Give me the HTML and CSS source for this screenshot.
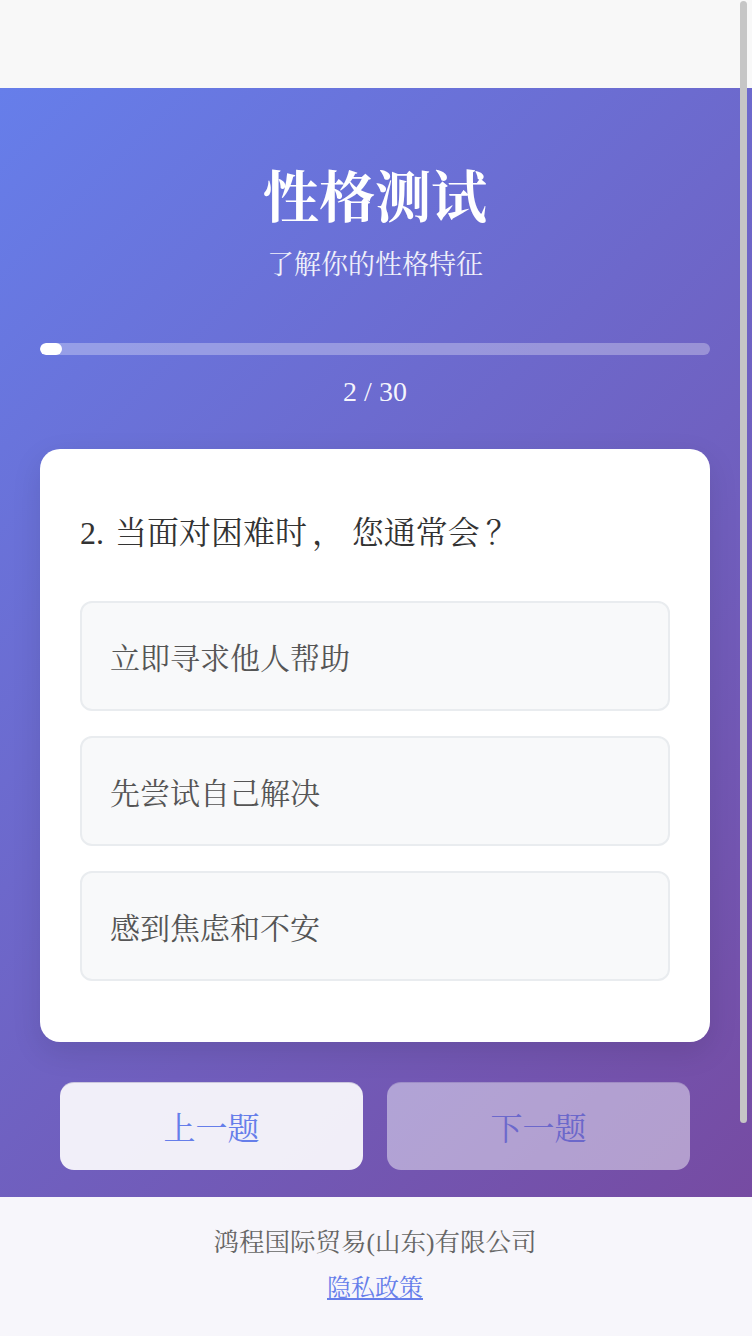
FILE: index.html
```html
<!DOCTYPE html>
<html>
<head>
<meta charset="utf-8">
<title>性格测试</title>
<link rel="stylesheet" href="styles.css">
</head>
<body>
<div class="topbar"></div>
<main class="main">
  <header class="hero">
    <h1 class="title">性格测试</h1>
    <p class="subtitle">了解你的性格特征</p>
  </header>
  <div class="progress"><div class="progress-fill" style="width:3.33%"></div></div>
  <div class="counter">2 / 30</div>
  <section class="card">
    <h2 class="question">2. 当面对困难时<span class="comma">，</span>您通常会<span class="fw">？</span></h2>
    <div class="options">
      <div class="option">立即寻求他人帮助</div>
      <div class="option">先尝试自己解决</div>
      <div class="option">感到焦虑和不安</div>
    </div>
  </section>
  <div class="nav">
    <button class="btn btn-prev">上一题</button>
    <button class="btn btn-next" disabled>下一题</button>
  </div>
</main>
<footer class="footer">
  <p class="company">鸿程国际贸易(山东)有限公司</p>
  <a class="privacy" href="#">隐私政策</a>
</footer>
<div class="scroll-thumb" aria-hidden="true"></div>
</body>
</html>
```

FILE: styles.css
```css
* { box-sizing: border-box; }

html, body {
  margin: 0;
  padding: 0;
}

body {
  background: #f8f8f8;
  font-family: "Liberation Serif", "Noto Serif CJK SC", serif;
}

.topbar {
  height: 88px;
  background: #f8f8f8;
}

.main {
  background: linear-gradient(135deg, #667eea 0%, #764ba2 100%);
  padding: 76px 42px 27px 40px;
}

.hero {
  text-align: center;
  color: #fff;
}

.title {
  margin: 0;
  font-size: 56px;
  line-height: 68px;
  font-weight: bold;
}

.subtitle {
  margin: 13px 0 0;
  font-size: 27px;
  line-height: 40px;
  opacity: 0.9;
}

.progress {
  margin-top: 58px;
  height: 12px;
  border-radius: 6px;
  background: rgba(255, 255, 255, 0.3);
  overflow: hidden;
}

.progress-fill {
  height: 100%;
  background: #fff;
  border-radius: 6px;
}

.counter {
  margin-top: 17px;
  text-align: center;
  color: rgba(255, 255, 255, 0.95);
  font-size: 28px;
  line-height: 40px;
}

.card {
  margin-top: 37px;
  background: #fff;
  border-radius: 20px;
  padding: 60px 40px 61px;
  box-shadow: 0 10px 30px rgba(0, 0, 0, 0.1);
}

.question {
  margin: 0 0 44px;
  font-size: 32px;
  line-height: 48px;
  font-weight: normal;
  color: #333;
  word-spacing: 3px;
}

.comma {
  display: inline-block;
  width: 1.4em;
  padding-left: 5px;
  text-align: left;
}

.fw {
  display: inline-block;
  width: 1em;
  padding-left: 6px;
  text-align: center;
}

.options {
  display: flex;
  flex-direction: column;
  gap: 25px;
}

.option {
  height: 110px;
  display: flex;
  align-items: center;
  padding: 0 28px;
  background: #f8f9fa;
  border: 2px solid #e9ecef;
  border-radius: 12px;
  font-size: 30px;
  color: #555;
}

.nav {
  margin-top: 40px;
  padding: 0 20px;
  display: flex;
  gap: 24px;
}

.btn {
  flex: 1;
  height: 88px;
  border: none;
  border-top: 1px solid rgba(90, 80, 140, 0.25);
  border-radius: 14px;
  background: rgba(255, 255, 255, 0.9);
  color: #667eea;
  font-family: inherit;
  font-size: 32px;
  padding: 0 0 2px;
}

.btn-next {
  opacity: 0.5;
}

.footer {
  background: #f7f6fb;
  text-align: center;
  padding: 26px 22px 284px 20px;
}

.company {
  margin: 0;
  font-size: 25.5px;
  line-height: 40px;
  color: #666;
}

.privacy {
  display: inline-block;
  margin-top: 7px;
  font-size: 24px;
  line-height: 36px;
  color: #667eea;
}

.scroll-thumb {
  position: fixed;
  top: 1px;
  right: 5px;
  width: 7px;
  height: 1122px;
  border-radius: 4px;
  background: #c6c6c6;
}
```
